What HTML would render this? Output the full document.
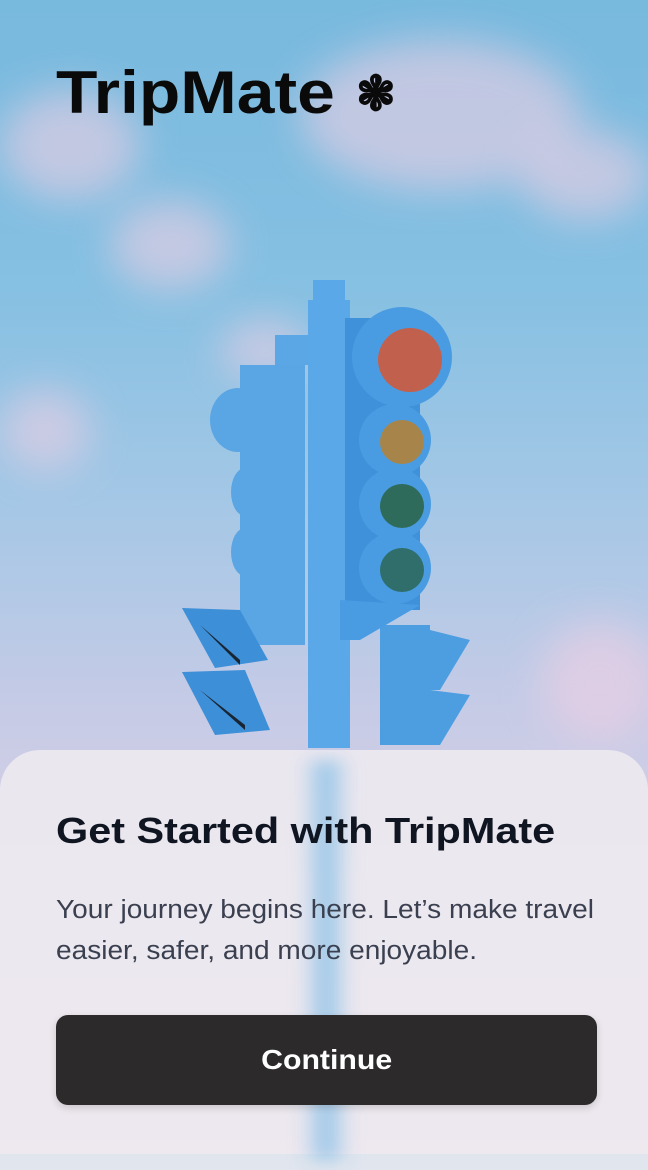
<!DOCTYPE html>
<html><head><meta charset="utf-8"><style>
html,body{margin:0;padding:0}
body{width:648px;height:1154px;position:relative;overflow:hidden;font-family:"Liberation Sans",sans-serif;
background:linear-gradient(180deg,#78b9de 0%,#86c0e2 25%,#a7c8e6 45%,#c7cbe6 62%,#ddd2e6 80%,#e8d6e6 100%);}
.cl{position:absolute;border-radius:50%;filter:blur(20px);background:#efd0e4;opacity:.6}
.logo{position:absolute;left:56px;top:58px;font-size:60px;font-weight:bold;color:#0a0a0a;transform:scaleX(1.13);transform-origin:left;white-space:nowrap}
.card{position:absolute;left:0;top:750px;width:648px;height:420px;border-radius:40px 40px 0 0;
background:rgba(238,234,240,.88);}
.pole2{position:absolute;left:300px;top:760px;width:52px;height:400px;background:linear-gradient(90deg,rgba(150,200,235,0),rgba(120,185,230,.7),rgba(150,200,235,0));filter:blur(8px)}
h1{position:absolute;left:56px;top:810px;margin:0;font-size:36px;font-weight:bold;color:#101522;transform:scaleX(1.15);transform-origin:left;white-space:nowrap}
p{position:absolute;left:56px;top:890px;margin:0;font-size:25.5px;line-height:41px;color:#3a4050;width:500px;transform:scaleX(1.1);transform-origin:left}
.btn{position:absolute;left:56px;top:1015px;width:541px;height:90px;border-radius:12px;background:#2c2a2b;color:#fff;
font-size:28px;font-weight:bold;text-align:center;line-height:90px;box-shadow:0 3px 8px rgba(0,0,0,.15)}
.btn span{display:inline-block;transform:scaleX(1.08)}
</style></head><body>
<div class="cl" style="left:0;top:90px;width:140px;height:110px"></div>
<div class="cl" style="left:110px;top:200px;width:120px;height:90px"></div>
<div class="cl" style="left:300px;top:40px;width:280px;height:150px"></div>
<div class="cl" style="left:520px;top:130px;width:130px;height:90px"></div>
<div class="cl" style="left:0;top:390px;width:90px;height:80px"></div>
<div class="cl" style="left:220px;top:320px;width:90px;height:60px"></div>
<div class="cl" style="left:540px;top:620px;width:120px;height:120px"></div>
<div class="logo">TripMate <span style="font-size:48px;position:relative;top:-3px;display:inline-block;transform:scaleX(0.88)">❃</span></div>
<svg style="position:absolute;left:0;top:0" width="648" height="760">
<g fill="#4f9fe0">
<rect x="240" y="365" width="65" height="280" fill="#5aa6e4"/>
<ellipse cx="238" cy="420" rx="28" ry="32" fill="#5aa6e4"/>
<ellipse cx="245" cy="492" rx="14" ry="24" fill="#5aa6e4"/>
<ellipse cx="245" cy="552" rx="14" ry="24" fill="#5aa6e4"/>
<rect x="275" y="335" width="40" height="30" fill="#5ba7e6"/>
<polygon points="182,608 240,610 268,660 215,668" fill="#3d8fd8"/>
<polygon points="182,672 245,670 270,730 215,735" fill="#3d8fd8"/>
<polygon points="200,625 240,660 240,665" fill="#1a2533"/>
<polygon points="200,690 245,725 245,730" fill="#1a2533"/>
<rect x="380" y="625" width="50" height="120" fill="#4d9ee0"/>
<polygon points="430,630 470,640 440,690 430,690" fill="#4d9ee0"/>
<polygon points="430,690 470,695 440,745 430,745" fill="#4d9ee0"/>
<rect x="308" y="300" width="42" height="448" fill="#5aa8e8"/>
<rect x="313" y="280" width="32" height="25" fill="#5aa8e8"/>
<rect x="345" y="318" width="75" height="292" fill="#3f92da"/>
<circle cx="402" cy="357" r="50" fill="#4a9ce2"/>
<circle cx="410" cy="360" r="32" fill="#c2604e"/>
<circle cx="395" cy="440" r="36" fill="#4a9ce2"/>
<circle cx="402" cy="442" r="22" fill="#a7854a"/>
<circle cx="395" cy="504" r="36" fill="#4a9ce2"/>
<circle cx="402" cy="506" r="22" fill="#2f6b5a"/>
<circle cx="395" cy="568" r="36" fill="#4a9ce2"/>
<circle cx="402" cy="570" r="22" fill="#2f6e6a"/>
<polygon points="340,600 420,605 360,640 340,640" fill="#4a9ce2"/>
</g>
</svg>
<div class="card"></div>
<div class="pole2"></div>
<h1>Get Started with TripMate</h1>
<p>Your journey begins here. Let’s make travel easier, safer, and more enjoyable.</p>
<div class="btn"><span>Continue</span></div>
</body></html>
